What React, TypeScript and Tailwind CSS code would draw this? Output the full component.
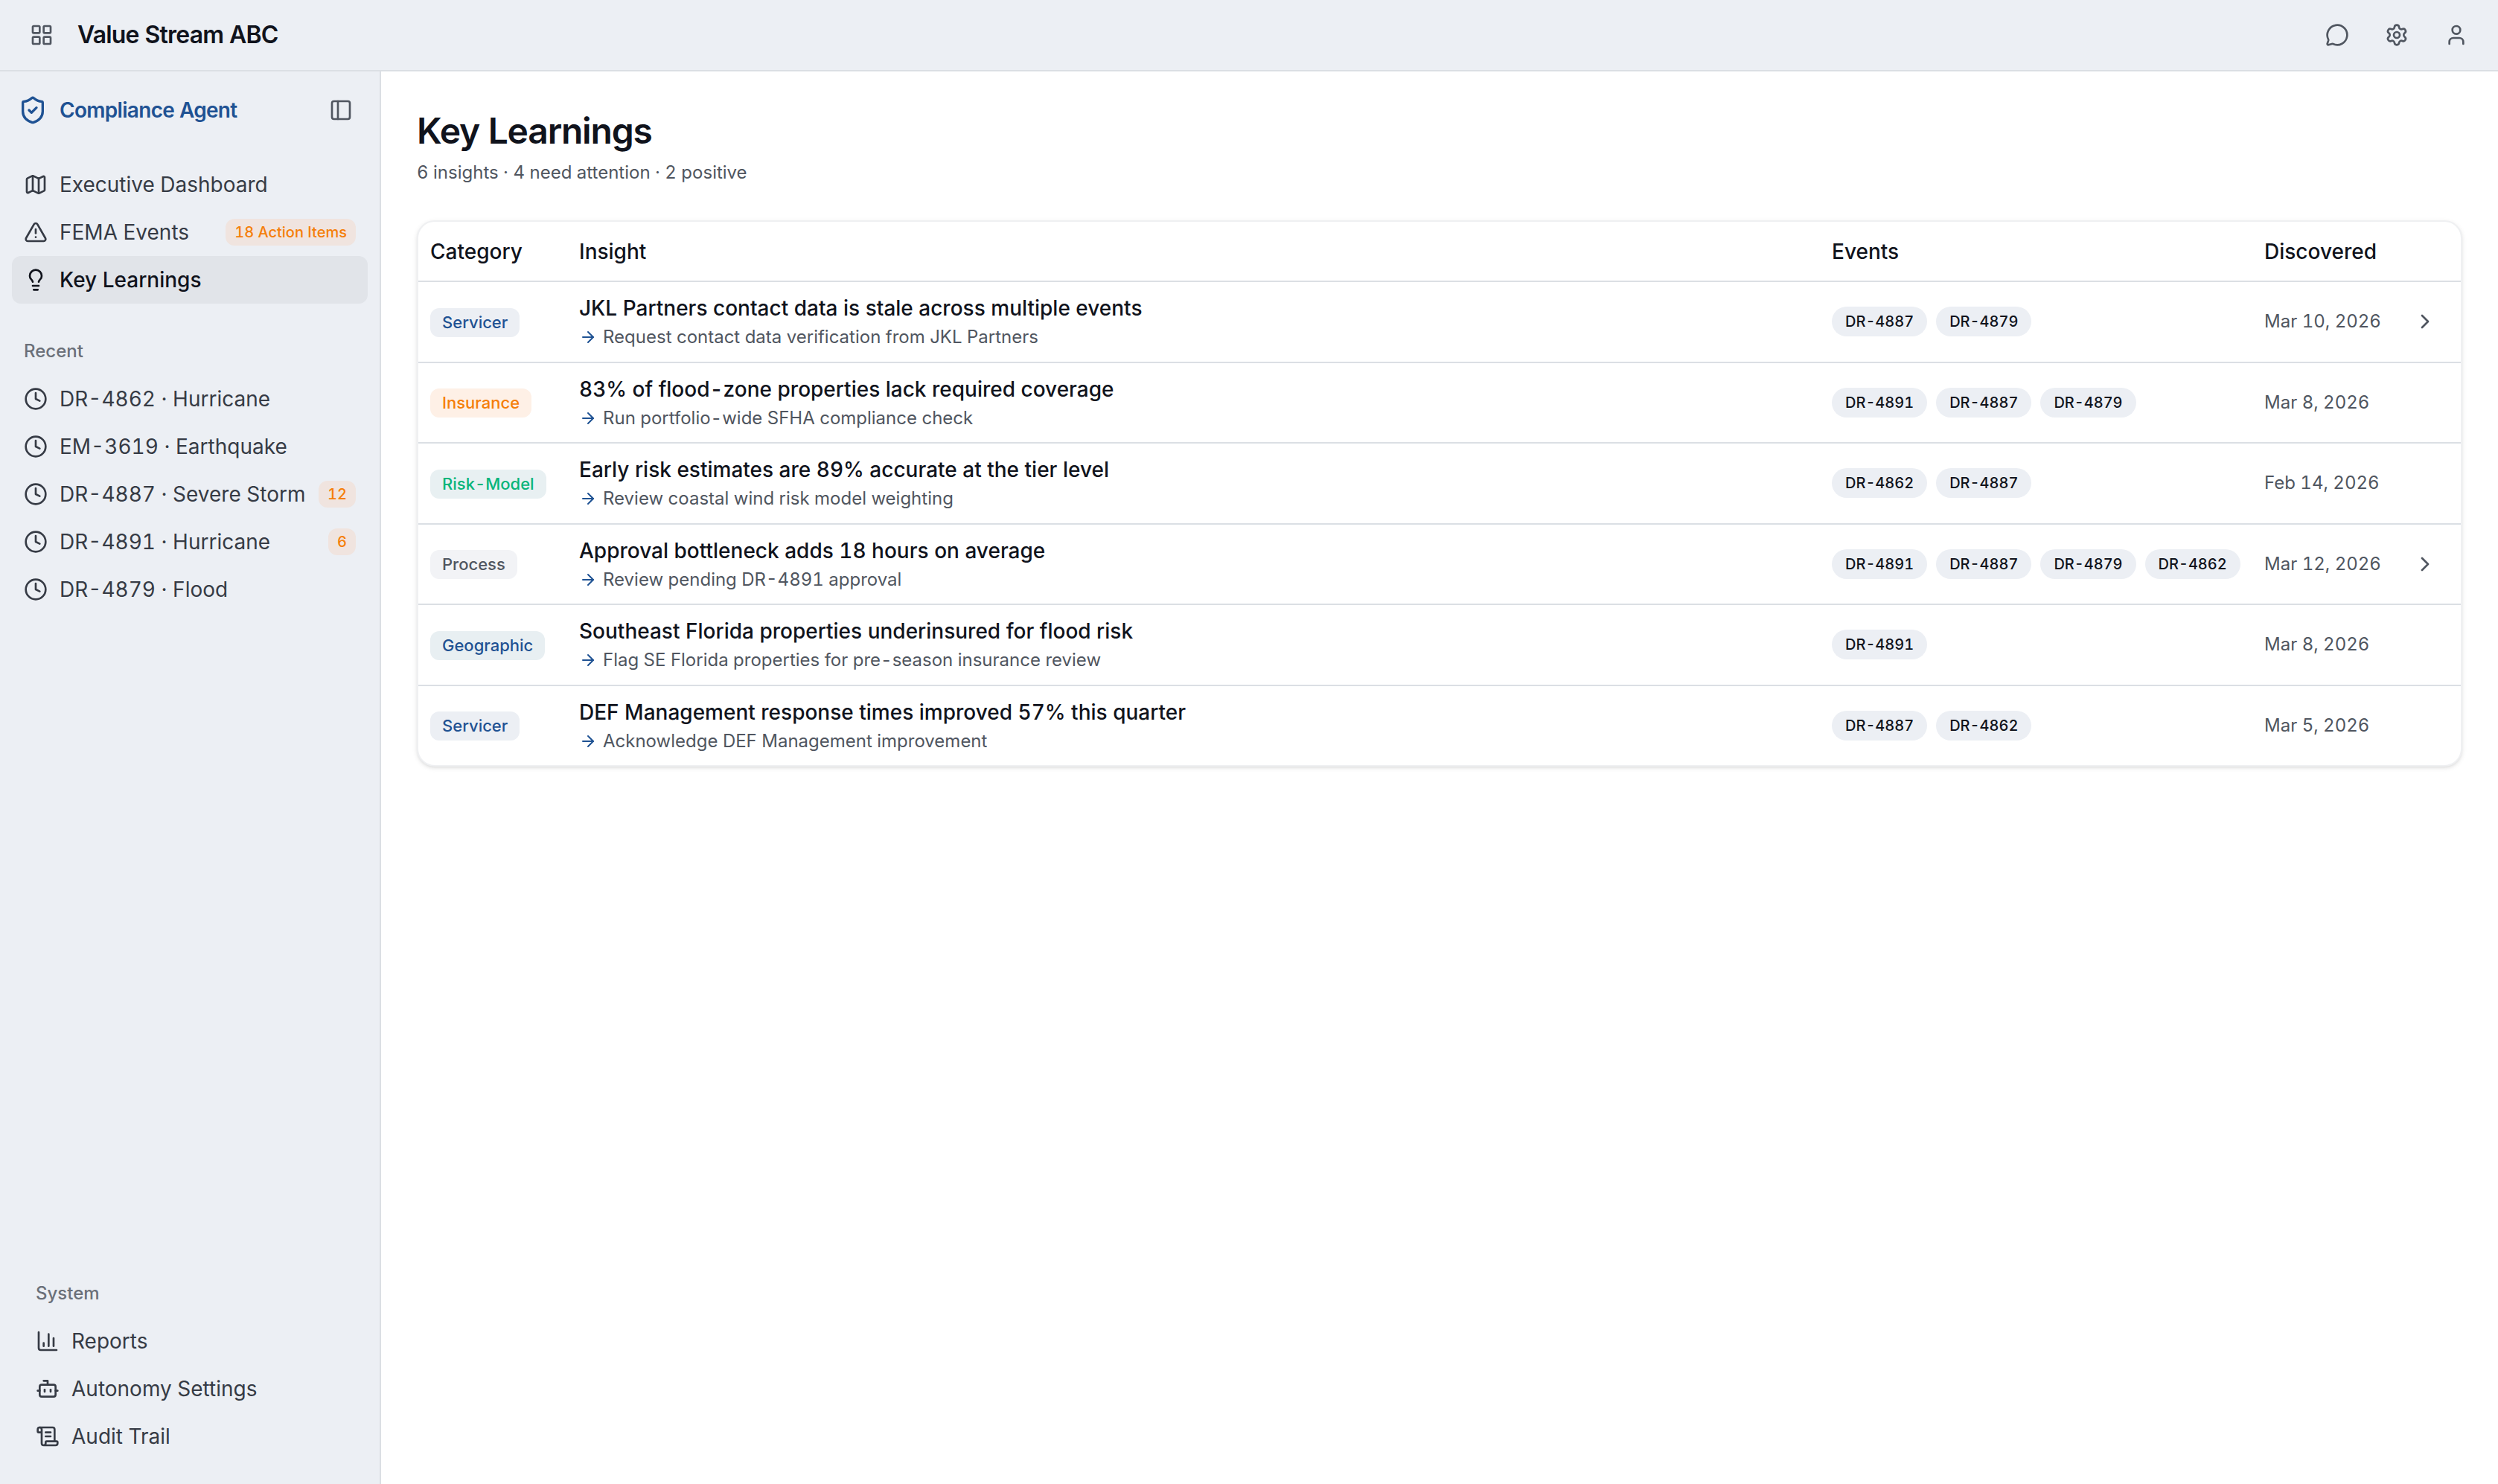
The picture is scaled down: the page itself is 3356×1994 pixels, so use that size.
/**
 * Key Learnings page
 *
 * Compliance Agent workspace: top bar, side navigation and the insights table.
 */

import {
  ArrowRight,
  Bot,
  ChartColumn,
  ChevronRight,
  Clock,
  LayoutGrid,
  Lightbulb,
  type LucideIcon,
  Map as MapIcon,
  MessageCircle,
  PanelLeft,
  ScrollText,
  Settings,
  ShieldCheck,
  TriangleAlert,
  User,
} from 'lucide-react';

interface NavEntry {
  label: string;
  icon: LucideIcon;
  badge?: string;
  active?: boolean;
}

interface Insight {
  category: string;
  title: string;
  action: string;
  events: string[];
  discovered: string;
  hasDetails?: boolean;
}

const MAIN_NAV: NavEntry[] = [
  { label: 'Executive Dashboard', icon: MapIcon },
  { label: 'FEMA Events', icon: TriangleAlert, badge: '18 Action Items' },
  { label: 'Key Learnings', icon: Lightbulb, active: true },
];

const RECENT_NAV: NavEntry[] = [
  { label: 'DR-4862 · Hurricane', icon: Clock },
  { label: 'EM-3619 · Earthquake', icon: Clock },
  { label: 'DR-4887 · Severe Storm', icon: Clock, badge: '12' },
  { label: 'DR-4891 · Hurricane', icon: Clock, badge: '6' },
  { label: 'DR-4879 · Flood', icon: Clock },
];

const SYSTEM_NAV: NavEntry[] = [
  { label: 'Reports', icon: ChartColumn },
  { label: 'Autonomy Settings', icon: Bot },
  { label: 'Audit Trail', icon: ScrollText },
];

const INSIGHTS: Insight[] = [
  {
    category: 'Servicer',
    title: 'JKL Partners contact data is stale across multiple events',
    action: 'Request contact data verification from JKL Partners',
    events: ['DR-4887', 'DR-4879'],
    discovered: 'Mar 10, 2026',
    hasDetails: true,
  },
  {
    category: 'Insurance',
    title: '83% of flood-zone properties lack required coverage',
    action: 'Run portfolio-wide SFHA compliance check',
    events: ['DR-4891', 'DR-4887', 'DR-4879'],
    discovered: 'Mar 8, 2026',
  },
  {
    category: 'Risk-Model',
    title: 'Early risk estimates are 89% accurate at the tier level',
    action: 'Review coastal wind risk model weighting',
    events: ['DR-4862', 'DR-4887'],
    discovered: 'Feb 14, 2026',
  },
  {
    category: 'Process',
    title: 'Approval bottleneck adds 18 hours on average',
    action: 'Review pending DR-4891 approval',
    events: ['DR-4891', 'DR-4887', 'DR-4879', 'DR-4862'],
    discovered: 'Mar 12, 2026',
    hasDetails: true,
  },
  {
    category: 'Geographic',
    title: 'Southeast Florida properties underinsured for flood risk',
    action: 'Flag SE Florida properties for pre-season insurance review',
    events: ['DR-4891'],
    discovered: 'Mar 8, 2026',
  },
  {
    category: 'Servicer',
    title: 'DEF Management response times improved 57% this quarter',
    action: 'Acknowledge DEF Management improvement',
    events: ['DR-4887', 'DR-4862'],
    discovered: 'Mar 5, 2026',
  },
];

const CATEGORY_STYLES: Record<string, string> = {
  Servicer: 'bg-[#eceff4] text-[#1f5293]',
  Insurance: 'bg-[#fef0e6] text-[#f57f0a]',
  'Risk-Model': 'bg-[#e8f0f2] text-[#08b57b]',
  Process: 'bg-[#f2f3f6] text-[#505660]',
  Geographic: 'bg-[#e8eff2] text-[#1f5293]',
};

const ROW_GRID = 'grid grid-cols-[200px_1fr_581px_184px_96px] items-center';

function NavItem({ entry }: { entry: NavEntry }) {
  const Icon = entry.icon;
  return (
    <a
      className={`flex h-16 items-center gap-4 rounded-xl px-4 text-[28px] whitespace-nowrap ${
        entry.active ? 'bg-[#e1e4e9] font-medium text-[#10131c]' : 'text-[#363b45]'
      }`}
    >
      <Icon className="size-8 shrink-0" />
      <span className="flex-1">{entry.label}</span>
      {entry.badge && (
        <span className="flex h-9 items-center rounded-xl bg-[#f0e4df] px-3 text-[20px] font-medium text-[#f57f0a]">
          {entry.badge}
        </span>
      )}
    </a>
  );
}

function TopBar() {
  return (
    <header className="flex h-24 shrink-0 items-center justify-between border-b-2 border-[#dbdfe4] bg-[#eceff4] px-10">
      <div className="flex items-center gap-8">
        <LayoutGrid className="size-8 text-[#505660]" />
        <span className="text-[32px] font-semibold tracking-[-0.025em] text-[#10131c]">
          Value Stream ABC
        </span>
      </div>
      <div className="flex items-center gap-12 text-[#505660]">
        <MessageCircle className="size-8" />
        <Settings className="size-8" />
        <User className="size-8" />
      </div>
    </header>
  );
}

function Sidebar() {
  return (
    <aside className="flex w-[512px] shrink-0 flex-col border-r-2 border-[#dbdfe4] bg-[#eceff4]">
      <div className="flex h-[104px] items-center pr-9 pl-6">
        <ShieldCheck className="size-10 text-[#1f5293]" />
        <span className="ml-4 flex-1 text-[28px] font-semibold tracking-[-0.025em] text-[#1f5293]">
          Compliance Agent
        </span>
        <PanelLeft className="size-8 text-[#505660]" />
      </div>

      <nav className="mt-4 px-4">
        {MAIN_NAV.map((entry) => (
          <NavItem key={entry.label} entry={entry} />
        ))}
      </nav>

      {/* Recent */}
      <nav className="mt-8 px-4">
        <div className="flex h-16 items-center px-4 text-[24px] font-medium text-[#6b7079]">
          Recent
        </div>
        {RECENT_NAV.map((entry) => (
          <NavItem key={entry.label} entry={entry} />
        ))}
      </nav>

      {/* System */}
      <nav className="mt-auto px-8 pb-8">
        <div className="flex h-16 items-center px-4 text-[24px] font-medium text-[#6b7079]">
          System
        </div>
        {SYSTEM_NAV.map((entry) => (
          <NavItem key={entry.label} entry={entry} />
        ))}
      </nav>
    </aside>
  );
}

function InsightRow({ insight }: { insight: Insight }) {
  return (
    <div className={`${ROW_GRID} h-[108.5px] border-b-2 border-[#dbdfe4] last:h-[106.5px] last:border-b-0`}>
      <div className="px-4 pt-0.5">
        <span
          className={`inline-flex h-[39px] items-center rounded-xl px-4 align-middle text-[22px] font-medium ${CATEGORY_STYLES[insight.category]}`}
        >
          {insight.category}
        </span>
      </div>
      <div className="px-4 pt-px">
        <div className="text-[28px] leading-10 font-medium text-[#10131c]">{insight.title}</div>
        <div className="flex items-center gap-2 pt-px text-[24px] leading-9 text-[#505660]">
          <ArrowRight className="size-6 text-[#1f5293]" />
          {insight.action}
        </div>
      </div>
      <div className="flex gap-3 px-4">
        {insight.events.map((event) => (
          <span
            key={event}
            className="flex h-10 items-center rounded-full bg-[#eceff4] px-[18px] text-[20px] font-medium whitespace-nowrap text-[#10131c]"
          >
            {event}
          </span>
        ))}
      </div>
      <div className="px-4 text-[24px] whitespace-nowrap text-[#505660]">{insight.discovered}</div>
      <div className="flex justify-center">
        {insight.hasDetails && <ChevronRight className="size-8 text-[#505660]" />}
      </div>
    </div>
  );
}

export default function App() {
  return (
    <div className="flex h-screen flex-col bg-white font-['Inter',sans-serif] text-[#10131c] tabular-nums antialiased">
      <TopBar />
      <div className="flex min-h-0 flex-1">
        <Sidebar />
        <main className="flex-1 p-12">
          <h1 className="text-[48px] leading-[64px] font-semibold tracking-[-0.025em]">Key Learnings</h1>
          <p className="mt-1.5 text-[24px] leading-9 text-[#505660]">
            6 insights · 4 need attention · 2 positive
          </p>

          <div className="mt-[46px] overflow-hidden rounded-3xl border-2 border-[#eff0f2] bg-white shadow-[0_2px_6px_rgba(0,0,0,0.1),0_2px_4px_-2px_rgba(0,0,0,0.1)]">
            <div className={`${ROW_GRID} h-[81px] border-b-2 border-[#dbdfe4] text-[28px] font-medium`}>
              <div className="px-4">Category</div>
              <div className="px-4">Insight</div>
              <div className="px-4">Events</div>
              <div className="px-4">Discovered</div>
              <div />
            </div>
            {INSIGHTS.map((insight) => (
              <InsightRow key={insight.title} insight={insight} />
            ))}
          </div>
        </main>
      </div>
    </div>
  );
}
